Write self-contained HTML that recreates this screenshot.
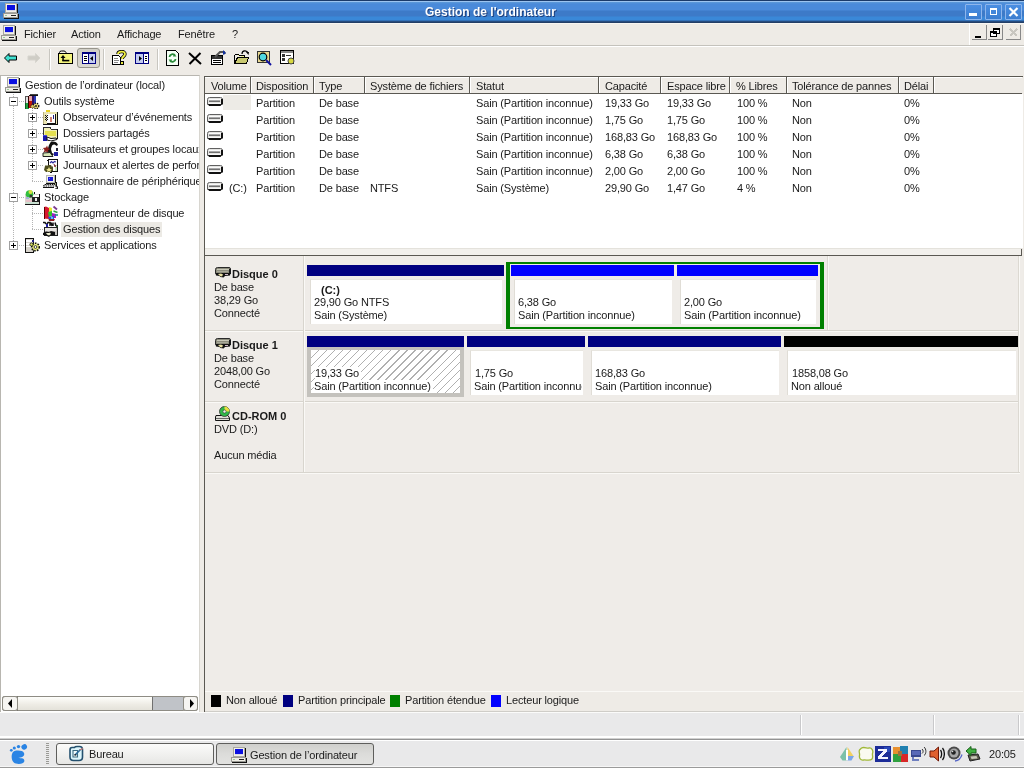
<!DOCTYPE html><html><head><meta charset="utf-8"><style>
*{margin:0;padding:0;box-sizing:border-box}
html,body{width:1024px;height:768px;overflow:hidden;background:#EEEBE6;font-family:"Liberation Sans", sans-serif;font-size:11px;color:#000}
.a{position:absolute}
.t{position:absolute;white-space:pre;line-height:13px;font-size:11px;letter-spacing:-0.15px;color:#1a1a1a}
.b{font-weight:bold;letter-spacing:0}
</style></head><body><div id="root" style="position:absolute;left:0;top:0;width:1024px;height:768px;overflow:hidden;will-change:transform">
<div class="a" style="left:0;top:0;width:1024px;height:23px;background:linear-gradient(#1A3A6A 0px,#1A3A6A 1px,#9CC4F0 1px,#9CC4F0 2px,#5E9AD8 2px,#4A8ADA 4px,#4A8ADA 10px,#3D7AC8 11px,#3D7AC8 16px,#3A88D8 17px,#3A88D8 20px,#2A5A98 21px,#233E66 22px,#233E66 23px)"></div>
<svg class="a" style="left:3px;top:3px" width="16" height="16" viewBox="0 0 16 16" shape-rendering="crispEdges"><rect x="3" y="1" width="12" height="10" fill="#111"/><rect x="2" y="0" width="12" height="10" fill="#A8A8A0"/><rect x="3" y="1" width="10" height="8" fill="#F2F0E8"/><rect x="4" y="2" width="8" height="5" fill="#0A10E0"/><rect x="4" y="7" width="8" height="1" fill="#D8D8E8"/><rect x="1" y="11" width="15" height="5" fill="#111"/><rect x="0" y="10" width="15" height="5" fill="#9A9A94"/><rect x="1" y="11" width="13" height="3" fill="#F0EEE6"/><rect x="8" y="12" width="5" height="1" fill="#222"/><rect x="2" y="12" width="2" height="1" fill="#9c9"/></svg>
<div class="t b" style="left:425px;top:5px;color:#fff;font-size:12px;line-height:15px;text-shadow:1px 1px 0 #1c3c78">Gestion de l'ordinateur</div>
<div class="a" style="left:965px;top:4px;width:17px;height:16px;border:1px solid #8EB6EC;border-radius:1px;background:linear-gradient(#4A8EE2,#3C7ED0)"></div>
<div class="a" style="left:985px;top:4px;width:17px;height:16px;border:1px solid #8EB6EC;border-radius:1px;background:linear-gradient(#4A8EE2,#3C7ED0)"></div>
<div class="a" style="left:1005px;top:4px;width:17px;height:16px;border:1px solid #8EB6EC;border-radius:1px;background:linear-gradient(#4A8EE2,#3C7ED0)"></div>
<div class="a" style="left:969px;top:13px;width:8px;height:3px;background:#fff;"></div>
<div class="a" style="left:990px;top:8px;width:7px;height:7px;border:1px solid #fff;border-top-width:2px"></div>
<svg class="a" style="left:1008px;top:7px" width="11" height="10" viewBox="0 0 11 10"><path d="M1.5 1 L9.5 9 M9.5 1 L1.5 9" stroke="#fff" stroke-width="2.2"/></svg>
<div class="a" style="left:0px;top:23px;width:1024px;height:1px;background:#F8F6F2;"></div>
<div class="a" style="left:0px;top:45px;width:1024px;height:1px;background:#C4C2BC;"></div>
<div class="a" style="left:0px;top:46px;width:1024px;height:1px;background:#fff;"></div>
<svg class="a" style="left:1px;top:25px" width="16" height="16" viewBox="0 0 16 16" shape-rendering="crispEdges"><rect x="3" y="1" width="12" height="10" fill="#111"/><rect x="2" y="0" width="12" height="10" fill="#A8A8A0"/><rect x="3" y="1" width="10" height="8" fill="#F2F0E8"/><rect x="4" y="2" width="8" height="5" fill="#0A10E0"/><rect x="4" y="7" width="8" height="1" fill="#D8D8E8"/><rect x="1" y="11" width="15" height="5" fill="#111"/><rect x="0" y="10" width="15" height="5" fill="#9A9A94"/><rect x="1" y="11" width="13" height="3" fill="#F0EEE6"/><rect x="8" y="12" width="5" height="1" fill="#222"/><rect x="2" y="12" width="2" height="1" fill="#9c9"/></svg>
<div class="t" style="left:24px;top:28px;">Fichier</div>
<div class="t" style="left:71px;top:28px;">Action</div>
<div class="t" style="left:117px;top:28px;">Affichage</div>
<div class="t" style="left:178px;top:28px;">Fenêtre</div>
<div class="t" style="left:232px;top:28px;">?</div>
<div class="a" style="left:969px;top:23px;width:1px;height:22px;background:#fff;"></div>
<div class="a" style="left:972px;top:25px;width:15px;height:15px;background:none;border-right:1px solid #888;border-bottom:1px solid #888"></div>
<div class="a" style="left:975px;top:36px;width:6px;height:2px;background:#000;"></div>
<div class="a" style="left:988px;top:25px;width:15px;height:15px;background:none;border-right:1px solid #888;border-bottom:1px solid #888"></div>
<svg class="a" style="left:990px;top:28px" width="11" height="10" viewBox="0 0 11 10" shape-rendering="crispEdges"><path d="M3.5 0.5h6v5h-6z M0.5 3.5h6v5h-6z" fill="#fff" stroke="#000" stroke-width="1"/><rect x="3" y="0" width="7" height="2" fill="#000"/><rect x="0" y="3" width="7" height="2" fill="#000"/></svg>
<div class="a" style="left:1006px;top:25px;width:15px;height:15px;background:none;border-right:1px solid #888;border-bottom:1px solid #888"></div>
<svg class="a" style="left:1009px;top:28px" width="9" height="9" viewBox="0 0 9 9" shape-rendering="crispEdges"><path d="M1 1 L8 8 M8 1 L1 8" stroke="#C8C6C0" stroke-width="1.6"/></svg>
<div class="a" style="left:49px;top:49px;width:1px;height:21px;background:#C8C6C0;"></div>
<div class="a" style="left:50px;top:49px;width:1px;height:21px;background:#fff;"></div>
<div class="a" style="left:103px;top:49px;width:1px;height:21px;background:#C8C6C0;"></div>
<div class="a" style="left:104px;top:49px;width:1px;height:21px;background:#fff;"></div>
<div class="a" style="left:157px;top:49px;width:1px;height:21px;background:#C8C6C0;"></div>
<div class="a" style="left:158px;top:49px;width:1px;height:21px;background:#fff;"></div>
<svg class="a" style="left:4px;top:53px" width="14" height="11" viewBox="0 0 14 11" shape-rendering="crispEdges"><path d="M0.5 5 L5 0.5 L5 3 L12.5 3 L12.5 7 L5 7 L5 9.5 Z" fill="#40E0D0" stroke="#000" stroke-width="1" shape-rendering="auto"/></svg>
<svg class="a" style="left:27px;top:53px" width="14" height="11" viewBox="0 0 14 11" shape-rendering="crispEdges"><path d="M13 5 L8.5 0.5 L8.5 3 L1 3 L1 7 L8.5 7 L8.5 9.5 Z" fill="#CFCDC6" stroke="#D6D4CE" stroke-width="1" shape-rendering="auto"/></svg>
<svg class="a" style="left:58px;top:50px" width="15" height="14" viewBox="0 0 15 14" shape-rendering="auto"><path d="M1.5 3.5 L1.5 2.5 Q1.5 1 3.5 1 L6 1 Q7.5 1 8 2.5 L8.5 3.5" fill="#F4F2E8" stroke="#000"/><rect x="0.5" y="3.5" width="14" height="10" fill="#F4F47C" stroke="#000"/><path d="M2.5 8 L5 5 L7.5 8 Z" fill="#000"/><rect x="4.3" y="7.5" width="1.5" height="3.5" fill="#000"/><rect x="4.3" y="9.8" width="7" height="1.6" fill="#000"/></svg>
<div class="a" style="left:77px;top:48px;width:23px;height:20px;border:1px solid #97958C;border-radius:3px;background:linear-gradient(#D0CEC6,#DCDAD2)"></div>
<svg class="a" style="left:82px;top:52px" width="14" height="12" viewBox="0 0 14 12" shape-rendering="crispEdges"><rect x="0" y="0" width="14" height="12" fill="#000080"/><rect x="1" y="2" width="5" height="9" fill="#fff"/><rect x="7" y="2" width="6" height="9" fill="#C4CCF0"/><rect x="2" y="4" width="3" height="1" fill="#000"/><rect x="2" y="6" width="3" height="1" fill="#000"/><rect x="2" y="8" width="3" height="1" fill="#000"/><path d="M8 6.5 L11 4 L11 9 Z" fill="#000" shape-rendering="auto"/></svg>
<svg class="a" style="left:112px;top:50px" width="15" height="15" viewBox="0 0 15 15" shape-rendering="crispEdges"><path d="M0.5 5.5 L6.5 5.5 L8.5 7.5 L8.5 14.5 L0.5 14.5 Z" fill="#fff" stroke="#000"/><rect x="2" y="8" width="4" height="1" fill="#888"/><rect x="2" y="10" width="5" height="1" fill="#888"/><rect x="2" y="12" width="4" height="1" fill="#888"/><path d="M6 4 C6 1 13 0.5 13 4 C13 6.5 10 6.5 10 9" fill="none" stroke="#000" stroke-width="3.4" shape-rendering="auto"/><path d="M6 4 C6 1 13 0.5 13 4 C13 6.5 10 6.5 10 9" fill="none" stroke="#F0F040" stroke-width="1.8" shape-rendering="auto"/><rect x="8.5" y="11" width="3" height="3" fill="#E8E840" stroke="#000" stroke-width="1"/></svg>
<svg class="a" style="left:135px;top:52px" width="14" height="12" viewBox="0 0 14 12" shape-rendering="crispEdges"><rect x="0" y="0" width="14" height="12" fill="#000080"/><rect x="1" y="2" width="7" height="9" fill="#C4CCF0"/><rect x="9" y="2" width="4" height="9" fill="#fff"/><rect x="10" y="4" width="2" height="1" fill="#000"/><rect x="10" y="6" width="2" height="1" fill="#000"/><rect x="10" y="8" width="2" height="1" fill="#000"/><path d="M7 6.5 L4 4 L4 9 Z" fill="#000" shape-rendering="auto"/></svg>
<svg class="a" style="left:166px;top:50px" width="13" height="16" viewBox="0 0 13 16" shape-rendering="crispEdges"><path d="M0.5 0.5 L9.5 0.5 L12.5 3.5 L12.5 15.5 L0.5 15.5 Z" fill="#F4FFF4" stroke="#000"/><path d="M3.5 7 A3 3 0 0 1 9 5.5 M9.5 9 A3 3 0 0 1 4 10.5" fill="none" stroke="#2A8A3A" stroke-width="1.8" shape-rendering="auto"/><path d="M8 3.5 L10.5 6.5 L7 6.5Z M5 12.5 L2.5 9.5 L6 9.5Z" fill="#2A8A3A" shape-rendering="auto"/></svg>
<svg class="a" style="left:188px;top:52px" width="14" height="13" viewBox="0 0 14 13" shape-rendering="crispEdges"><path d="M1 1 L13 12 M12.5 1 L1.5 12" stroke="#000" stroke-width="2" shape-rendering="auto"/></svg>
<svg class="a" style="left:211px;top:50px" width="15" height="15" viewBox="0 0 15 15" shape-rendering="crispEdges"><rect x="0.5" y="5.5" width="11" height="9" fill="#fff" stroke="#000"/><rect x="1" y="6" width="10" height="3" fill="#333"/><rect x="2" y="10" width="8" height="1" fill="#000"/><rect x="2" y="12" width="8" height="1" fill="#000"/><path d="M4 7 L9 2 L13 2 L14 4" fill="none" stroke="#555" stroke-width="2" shape-rendering="auto"/><path d="M12 0 L15 3 L12 5Z" fill="#1030A0" shape-rendering="auto"/></svg>
<svg class="a" style="left:234px;top:50px" width="15" height="14" viewBox="0 0 15 14" shape-rendering="crispEdges"><path d="M0.5 4.5 L0.5 13.5 L12.5 13.5 L14.5 7.5 L3.5 7.5 L0.5 13.5" fill="#C8C870" stroke="#000"/><path d="M0.5 4.5 L4.5 4.5 L5.5 5.5 L10.5 5.5 L10.5 7.5" fill="#F0F090" stroke="#000"/><path d="M8 4 C8 0 13 0 14 3" fill="none" stroke="#000" stroke-width="1.2" shape-rendering="auto"/><path d="M12 2 L15 2 L14.5 5Z" fill="#000" shape-rendering="auto"/></svg>
<svg class="a" style="left:257px;top:51px" width="15" height="15" viewBox="0 0 15 15" shape-rendering="crispEdges"><rect x="0.5" y="0.5" width="12" height="11" fill="#E8D890" stroke="#333"/><circle cx="6" cy="6" r="3.8" fill="#50D8E0" stroke="#000" stroke-width="1.2" shape-rendering="auto"/><path d="M9 9 L14 14" stroke="#1010A0" stroke-width="2" shape-rendering="auto"/></svg>
<svg class="a" style="left:280px;top:50px" width="16" height="15" viewBox="0 0 16 15" shape-rendering="crispEdges"><rect x="0.5" y="0.5" width="13" height="13" fill="#fff" stroke="#000"/><rect x="1" y="1" width="12" height="2" fill="#888"/><rect x="2" y="4" width="3" height="3" fill="#333"/><rect x="6" y="5" width="5" height="1" fill="#333"/><rect x="2" y="8" width="3" height="3" fill="#333"/><circle cx="11" cy="11" r="3" fill="#D8D840" stroke="#444" shape-rendering="auto"/></svg>
<div class="a" style="left:0px;top:75px;width:200px;height:637px;background:#fff;border-left:1px solid #B8B6B0;border-top:1px solid #B8B6B0;border-right:1px solid #D8D6D0"></div>
<div class="a" style="left:1px;top:76px;width:198px;height:620px;overflow:hidden">
<div class="a" style="left:12px;top:18px;width:1px;height:152px;background:repeating-linear-gradient(#B4B4B4 0 1px, transparent 1px 2px);"></div>
<div class="a" style="left:31px;top:34px;width:1px;height:72px;background:repeating-linear-gradient(#B4B4B4 0 1px, transparent 1px 2px);"></div>
<div class="a" style="left:31px;top:130px;width:1px;height:24px;background:repeating-linear-gradient(#B4B4B4 0 1px, transparent 1px 2px);"></div>
<div class="a" style="left:16px;top:25px;width:8px;height:1px;background:repeating-linear-gradient(90deg,#B4B4B4 0 1px, transparent 1px 2px);"></div>
<div class="a" style="left:16px;top:121px;width:8px;height:1px;background:repeating-linear-gradient(90deg,#B4B4B4 0 1px, transparent 1px 2px);"></div>
<div class="a" style="left:16px;top:169px;width:8px;height:1px;background:repeating-linear-gradient(90deg,#B4B4B4 0 1px, transparent 1px 2px);"></div>
<div class="a" style="left:35px;top:41px;width:7px;height:1px;background:repeating-linear-gradient(90deg,#B4B4B4 0 1px, transparent 1px 2px);"></div>
<div class="a" style="left:35px;top:57px;width:7px;height:1px;background:repeating-linear-gradient(90deg,#B4B4B4 0 1px, transparent 1px 2px);"></div>
<div class="a" style="left:35px;top:73px;width:7px;height:1px;background:repeating-linear-gradient(90deg,#B4B4B4 0 1px, transparent 1px 2px);"></div>
<div class="a" style="left:35px;top:89px;width:7px;height:1px;background:repeating-linear-gradient(90deg,#B4B4B4 0 1px, transparent 1px 2px);"></div>
<div class="a" style="left:31px;top:105px;width:11px;height:1px;background:repeating-linear-gradient(90deg,#B4B4B4 0 1px, transparent 1px 2px);"></div>
<div class="a" style="left:31px;top:137px;width:11px;height:1px;background:repeating-linear-gradient(90deg,#B4B4B4 0 1px, transparent 1px 2px);"></div>
<div class="a" style="left:31px;top:153px;width:11px;height:1px;background:repeating-linear-gradient(90deg,#B4B4B4 0 1px, transparent 1px 2px);"></div>
<div class="a" style="left:8px;top:21px;width:9px;height:9px;background:#fff;border:1px solid #A0A0A0"></div><div class="a" style="left:10px;top:25px;width:5px;height:1px;background:#000;"></div>
<div class="a" style="left:27px;top:37px;width:9px;height:9px;background:#fff;border:1px solid #A0A0A0"></div><div class="a" style="left:29px;top:41px;width:5px;height:1px;background:#000;"></div><div class="a" style="left:31px;top:39px;width:1px;height:5px;background:#000;"></div>
<div class="a" style="left:27px;top:53px;width:9px;height:9px;background:#fff;border:1px solid #A0A0A0"></div><div class="a" style="left:29px;top:57px;width:5px;height:1px;background:#000;"></div><div class="a" style="left:31px;top:55px;width:1px;height:5px;background:#000;"></div>
<div class="a" style="left:27px;top:69px;width:9px;height:9px;background:#fff;border:1px solid #A0A0A0"></div><div class="a" style="left:29px;top:73px;width:5px;height:1px;background:#000;"></div><div class="a" style="left:31px;top:71px;width:1px;height:5px;background:#000;"></div>
<div class="a" style="left:27px;top:85px;width:9px;height:9px;background:#fff;border:1px solid #A0A0A0"></div><div class="a" style="left:29px;top:89px;width:5px;height:1px;background:#000;"></div><div class="a" style="left:31px;top:87px;width:1px;height:5px;background:#000;"></div>
<div class="a" style="left:8px;top:117px;width:9px;height:9px;background:#fff;border:1px solid #A0A0A0"></div><div class="a" style="left:10px;top:121px;width:5px;height:1px;background:#000;"></div>
<div class="a" style="left:8px;top:165px;width:9px;height:9px;background:#fff;border:1px solid #A0A0A0"></div><div class="a" style="left:10px;top:169px;width:5px;height:1px;background:#000;"></div><div class="a" style="left:12px;top:167px;width:1px;height:5px;background:#000;"></div>
<div class="a" style="left:60px;top:146px;width:101px;height:15px;background:#ECEAE5;"></div>
<svg class="a" style="left:4px;top:1px" width="16" height="16" viewBox="0 0 16 16" shape-rendering="crispEdges"><rect x="3" y="1" width="12" height="10" fill="#111"/><rect x="2" y="0" width="12" height="10" fill="#A8A8A0"/><rect x="3" y="1" width="10" height="8" fill="#F2F0E8"/><rect x="4" y="2" width="8" height="5" fill="#0A10E0"/><rect x="4" y="7" width="8" height="1" fill="#D8D8E8"/><rect x="1" y="11" width="15" height="5" fill="#111"/><rect x="0" y="10" width="15" height="5" fill="#9A9A94"/><rect x="1" y="11" width="13" height="3" fill="#F0EEE6"/><rect x="8" y="12" width="5" height="1" fill="#222"/><rect x="2" y="12" width="2" height="1" fill="#9c9"/></svg>
<svg class="a" style="left:23px;top:17px" width="16" height="16" viewBox="0 0 16 16" shape-rendering="crispEdges"><rect x="6" y="1" width="8" height="2" fill="#444"/><rect x="5" y="2" width="9" height="1" fill="#111"/><path d="M1.5 3 L4.5 3 L4.5 10 L1.5 10 Z" fill="#E0E0E0" stroke="#555" stroke-width="1"/><rect x="1" y="10" width="4" height="6" fill="#20A040"/><rect x="1" y="10" width="1" height="6" fill="#0A6020"/><rect x="5" y="3" width="3" height="5" fill="#E8A8A8"/><rect x="5" y="8" width="3" height="7" fill="#C01808"/><rect x="4" y="3" width="1" height="12" fill="#300"/><rect x="8" y="3" width="2" height="9" fill="#301060"/><rect x="10" y="3" width="1.5" height="8" fill="#2838B8"/><circle cx="12" cy="13" r="2.8" fill="#E8D878" stroke="#111" stroke-width="1.3" stroke-dasharray="1.3 1" shape-rendering="auto"/><circle cx="12" cy="13" r="0.9" fill="#111" shape-rendering="auto"/><circle cx="8.5" cy="13.5" r="1.8" fill="#D8C860" stroke="#111" stroke-width="1" stroke-dasharray="1 1" shape-rendering="auto"/></svg>
<svg class="a" style="left:41px;top:33px" width="16" height="16" viewBox="0 0 16 16" shape-rendering="crispEdges"><rect x="4" y="1" width="4" height="2" fill="#E8D020"/><rect x="1" y="3" width="15" height="13" fill="#111"/><rect x="1" y="3" width="14" height="12" fill="#EAE4B0"/><rect x="1" y="3" width="1" height="12" fill="#B8B080"/><rect x="5" y="5" width="9" height="10" fill="#111"/><rect x="5" y="5" width="8" height="9" fill="#fff"/><rect x="3" y="6" width="1" height="1" fill="#111"/><rect x="4" y="7" width="1" height="1" fill="#111"/><rect x="3" y="8" width="1" height="1" fill="#111"/><rect x="4" y="9" width="1" height="1" fill="#111"/><rect x="3" y="10" width="1" height="1" fill="#111"/><rect x="4" y="11" width="1" height="1" fill="#111"/><rect x="5" y="6" width="1" height="1" fill="#111"/><rect x="5" y="8" width="1" height="1" fill="#111"/><rect x="5" y="10" width="1" height="1" fill="#111"/><rect x="8" y="8" width="2" height="5" fill="#D08070"/><rect x="11" y="6" width="1" height="4" fill="#202080"/></svg>
<svg class="a" style="left:41px;top:49px" width="16" height="16" viewBox="0 0 16 16" shape-rendering="crispEdges"><path d="M2 2.5 L8 2.5 L9 4 L15.5 4 L15.5 13 L1.5 13 L1.5 3 Z" fill="#F2F0B8" stroke="#333" stroke-width="1"/><rect x="3" y="6" width="11" height="5" fill="#E4E050"/><rect x="15" y="4" width="1" height="10" fill="#111"/><rect x="1" y="10" width="4" height="6" fill="#1818A8"/><rect x="1" y="10" width="4" height="1" fill="#4848E0"/><path d="M5 12 L9 13.5 L14 13 L15 14.5 L9 16 L5 15 Z" fill="#fff" stroke="#111" stroke-width="1" shape-rendering="auto"/></svg>
<svg class="a" style="left:41px;top:65px" width="16" height="16" viewBox="0 0 16 16" shape-rendering="crispEdges"><path d="M9 0.5 C12 0 15.5 1 16 4 L14 5 C13 3 11 3.5 10 5 L9 8 L10 12 L12 13 L10 15 L7 13 L5.5 9 L7 4 Z" fill="#111" shape-rendering="auto"/><path d="M10 5 C11 3.5 13 3 14 5 L14.5 9 L13 11 L10.5 12 L9.5 8 Z" fill="#fff" shape-rendering="auto"/><path d="M1 7 L4 6.5 L5 4.5 L6 7 L8 8 L6 9.5 L6 12 L4 10.5 L1.5 11.5 L2.5 9 Z" fill="#8A2020" shape-rendering="auto"/><path d="M1 12 L8 11.5 L11 15.5 L1 15.5 Z" fill="#D8E8B8" stroke="#222" stroke-width="1" shape-rendering="auto"/><rect x="12" y="11" width="3.5" height="4" fill="#2020A0"/><rect x="14" y="7" width="2" height="3" fill="#223"/></svg>
<svg class="a" style="left:41px;top:81px" width="16" height="16" viewBox="0 0 16 16" shape-rendering="crispEdges"><rect x="6" y="2" width="10" height="13" fill="#111"/><rect x="7" y="3" width="8" height="11" fill="#fff"/><path d="M8 6 L9.5 4.5 L11 6 L12.5 4.5 L14 5" fill="none" stroke="#3030A0" stroke-width="1.2" shape-rendering="auto"/><path d="M12 7 L13 10 L14 8" fill="none" stroke="#803030" stroke-width="1" shape-rendering="auto"/><rect x="13" y="10" width="2" height="4" fill="#C8E8C0"/><rect x="5" y="3" width="2" height="1" fill="#111"/><path d="M3 9 L4 8 L5 9 L6 8 L9 8 L10 10 L11 9 L11 14 L8 15 L4 15 L2 13 Z" fill="#505020" shape-rendering="auto"/><path d="M7 10 L8 12 L10 12 L8.5 13 L9 15 L7 14 L5 15 L5.5 13 L4 12 L6 12 Z" fill="#F0E890" shape-rendering="auto"/><rect x="8" y="15" width="2" height="1" fill="#111"/></svg>
<svg class="a" style="left:41px;top:97px" width="16" height="16" viewBox="0 0 16 16" shape-rendering="crispEdges"><rect x="4" y="2" width="10" height="9" fill="#111"/><rect x="4" y="2" width="9" height="8" fill="#B8B8B0"/><rect x="5" y="3" width="7" height="6" fill="#F0F0F0"/><rect x="6" y="4" width="5" height="4" fill="#1818D0"/><rect x="7" y="5" width="1" height="1" fill="#6A6AF8"/><rect x="13" y="10" width="2" height="2" fill="#A8B080"/><rect x="14" y="9" width="1" height="4" fill="#111"/><path d="M3 11.5 L13 11.5 L14 13 L1 13 Z" fill="#F0F0F0" stroke="#111" stroke-width="1" stroke-dasharray="1.5 0.8" shape-rendering="auto"/><rect x="1" y="14" width="11" height="1.3" fill="#111"/><path d="M14 13 C16 13.5 16 16 14 16 L13 16" fill="#eee" stroke="#111" stroke-width="1.2" shape-rendering="auto"/></svg>
<svg class="a" style="left:23px;top:113px" width="16" height="16" viewBox="0 0 16 16" shape-rendering="crispEdges"><rect x="1" y="5" width="15" height="11" fill="#111"/><rect x="1" y="5" width="14" height="10" fill="#D8D4CC"/><rect x="9" y="6" width="6" height="2" fill="#fff"/><rect x="8" y="8" width="7" height="5" fill="#222"/><rect x="11" y="9" width="1.5" height="3" fill="#eee"/><rect x="2" y="11" width="6" height="2" fill="#E8C0C8"/><rect x="2" y="13" width="12" height="1.5" fill="#C8E0D0"/><circle cx="5.5" cy="5" r="3.8" fill="#30C040" shape-rendering="auto"/><circle cx="6.5" cy="3" r="2" fill="#D8E040" shape-rendering="auto"/><rect x="2" y="8" width="3" height="2" fill="#A8B0D8"/><circle cx="7" cy="7" r="1.5" fill="#333" shape-rendering="auto"/><rect x="10" y="3" width="1" height="2" fill="#111"/></svg>
<svg class="a" style="left:41px;top:129px" width="16" height="16" viewBox="0 0 16 16" shape-rendering="crispEdges"><path d="M2 2 L4 1.5 L7 3 L7 14 L2 13.5 Z" fill="#D81830" shape-rendering="auto"/><path d="M2 2 L2 13.5" stroke="#600" stroke-width="1"/><path d="M7 2 L10 3 L10 7 L7 8 Z" fill="#E8E830" shape-rendering="auto"/><path d="M6 7 L10 6 L10 11 L7 12 Z" fill="#30C030" shape-rendering="auto"/><path d="M10 8 L14 9 L14 13 L10 13 Z" fill="#A020C0" shape-rendering="auto"/><path d="M6 12 L12 11 L12 14 L7 14 Z" fill="#2050E0" shape-rendering="auto"/><rect x="9" y="12" width="2" height="2" fill="#60C0F0"/><path d="M6.5 14 L13 14 L12 16 L7 16 Z" fill="#902020" shape-rendering="auto"/><path d="M11.5 1.5 L15 4.5" stroke="#7A3A90" stroke-width="1.8" shape-rendering="auto"/><path d="M11.5 6 L15.5 7.5" stroke="#30A040" stroke-width="1.6" shape-rendering="auto"/><path d="M13 10 L16 10" stroke="#209090" stroke-width="1.6" shape-rendering="auto"/></svg>
<svg class="a" style="left:41px;top:145px" width="16" height="16" viewBox="0 0 16 16" shape-rendering="crispEdges"><path d="M1 1.5 L3 1.5 L4 3 M5 3 L6 1.5 L8 1.5 L8 5 M9 1.5 L10 5 M11 1.5 L11 5 M13 1.5 L14 5" fill="none" stroke="#111" stroke-width="1.5" shape-rendering="auto"/><rect x="4" y="3" width="2" height="4" fill="#2020A0"/><rect x="14" y="4" width="2" height="9" fill="#2A4A2A"/><path d="M2 6.5 L15 6.5 L15 14 L2 14 Z" fill="#C8C4C0" stroke="#222" stroke-width="1"/><rect x="3" y="7" width="11" height="3" fill="#E8E4E0"/><path d="M1 12 L4 10.5 L7 11 L9 10 L13 11 L13 14 L9 14 L7 16 L4 14.5 L1 14 Z" fill="#111" shape-rendering="auto"/><path d="M4 12 L7 12 L8 11.5 L9 13 L7 14.5 L5 13.5 Z" fill="#F0F0D0" shape-rendering="auto"/></svg>
<svg class="a" style="left:23px;top:161px" width="16" height="16" viewBox="0 0 16 16" shape-rendering="crispEdges"><rect x="1" y="1" width="9" height="15" rx="1.5" fill="#111"/><rect x="2" y="2" width="7" height="13" fill="#D8D4CC"/><rect x="2" y="3" width="6" height="2" fill="#fff"/><rect x="2" y="6" width="6" height="2" fill="#fff"/><rect x="2" y="9" width="6" height="1" fill="#fff"/><rect x="8" y="3" width="2" height="2" fill="#202080"/><circle cx="11.5" cy="10" r="3.8" fill="#E8EC80" stroke="#111" stroke-width="1.6" stroke-dasharray="1.6 1.2" shape-rendering="auto"/><circle cx="11.5" cy="10" r="1.4" fill="#fff" stroke="#111" stroke-width="0.8" shape-rendering="auto"/><circle cx="7.5" cy="7.5" r="1.6" fill="#D8E060" stroke="#111" stroke-width="0.8" shape-rendering="auto"/></svg>
<div class="t" style="left:24px;top:3px;letter-spacing:-0.12px">Gestion de l’ordinateur (local)</div>
<div class="t" style="left:43px;top:19px;letter-spacing:-0.12px">Outils système</div>
<div class="t" style="left:62px;top:35px;letter-spacing:-0.12px">Observateur d’événements</div>
<div class="t" style="left:62px;top:51px;letter-spacing:-0.12px">Dossiers partagés</div>
<div class="t" style="left:62px;top:67px;letter-spacing:-0.12px">Utilisateurs et groupes locaux</div>
<div class="t" style="left:62px;top:83px;letter-spacing:-0.12px">Journaux et alertes de performance</div>
<div class="t" style="left:62px;top:99px;letter-spacing:-0.12px">Gestionnaire de périphériques</div>
<div class="t" style="left:43px;top:115px;letter-spacing:-0.12px">Stockage</div>
<div class="t" style="left:62px;top:131px;letter-spacing:-0.12px">Défragmenteur de disque</div>
<div class="t" style="left:62px;top:147px;letter-spacing:-0.12px">Gestion des disques</div>
<div class="t" style="left:43px;top:163px;letter-spacing:-0.12px">Services et applications</div>
</div>
<div class="a" style="left:2px;top:696px;width:196px;height:15px;background:linear-gradient(#FEFEFB,#EDEBE4 60%,#E4E2DA);border:1px solid #8E8C84;border-radius:2px"></div>
<div class="a" style="left:17px;top:696px;width:1px;height:15px;background:#7A7870;"></div>
<div class="a" style="left:152px;top:697px;width:32px;height:13px;background:#C0C3C8;border-left:1px solid #707070"></div>
<div class="a" style="left:183px;top:696px;width:1px;height:15px;background:#9A988F;"></div>
<div class="a" style="left:2px;top:696px;width:16px;height:15px;border:1px solid #8E8C84;border-radius:3px;background:#F6F5F2"></div>
<div class="a" style="left:183px;top:696px;width:15px;height:15px;border:1px solid #8E8C84;border-radius:3px;background:#F6F5F2"></div>
<svg class="a" style="left:6px;top:699px" width="8" height="9" viewBox="0 0 8 9" shape-rendering="crispEdges"><path d="M6 0 L2 4.5 L6 9Z" fill="#000" shape-rendering="auto"/></svg>
<svg class="a" style="left:188px;top:699px" width="8" height="9" viewBox="0 0 8 9" shape-rendering="crispEdges"><path d="M2 0 L6 4.5 L2 9Z" fill="#000" shape-rendering="auto"/></svg>
<div class="a" style="left:204px;top:76px;width:819px;height:636px;background:#EEEBE6;border-left:1px solid #5A5852;border-top:1px solid #5A5852"></div>
<div class="a" style="left:205px;top:77px;width:817px;height:16px;background:#EEEBE6;border-top:1px solid #fff"></div>
<div class="a" style="left:205px;top:93px;width:817px;height:1px;background:#5A5852;"></div>
<div class="a" style="left:250px;top:77px;width:1px;height:16px;background:#5A5852;"></div>
<div class="a" style="left:251px;top:77px;width:1px;height:16px;background:#fff;"></div>
<div class="a" style="left:313px;top:77px;width:1px;height:16px;background:#5A5852;"></div>
<div class="a" style="left:314px;top:77px;width:1px;height:16px;background:#fff;"></div>
<div class="a" style="left:364px;top:77px;width:1px;height:16px;background:#5A5852;"></div>
<div class="a" style="left:365px;top:77px;width:1px;height:16px;background:#fff;"></div>
<div class="a" style="left:469px;top:77px;width:1px;height:16px;background:#5A5852;"></div>
<div class="a" style="left:470px;top:77px;width:1px;height:16px;background:#fff;"></div>
<div class="a" style="left:598px;top:77px;width:1px;height:16px;background:#5A5852;"></div>
<div class="a" style="left:599px;top:77px;width:1px;height:16px;background:#fff;"></div>
<div class="a" style="left:660px;top:77px;width:1px;height:16px;background:#5A5852;"></div>
<div class="a" style="left:661px;top:77px;width:1px;height:16px;background:#fff;"></div>
<div class="a" style="left:729px;top:77px;width:1px;height:16px;background:#5A5852;"></div>
<div class="a" style="left:730px;top:77px;width:1px;height:16px;background:#fff;"></div>
<div class="a" style="left:786px;top:77px;width:1px;height:16px;background:#5A5852;"></div>
<div class="a" style="left:787px;top:77px;width:1px;height:16px;background:#fff;"></div>
<div class="a" style="left:898px;top:77px;width:1px;height:16px;background:#5A5852;"></div>
<div class="a" style="left:899px;top:77px;width:1px;height:16px;background:#fff;"></div>
<div class="a" style="left:933px;top:77px;width:1px;height:16px;background:#5A5852;"></div>
<div class="a" style="left:934px;top:77px;width:1px;height:16px;background:#fff;"></div>
<div class="t" style="left:211px;top:80px;">Volume</div>
<div class="t" style="left:256px;top:80px;">Disposition</div>
<div class="t" style="left:319px;top:80px;">Type</div>
<div class="t" style="left:370px;top:80px;">Système de fichiers</div>
<div class="t" style="left:476px;top:80px;">Statut</div>
<div class="t" style="left:605px;top:80px;">Capacité</div>
<div class="t" style="left:667px;top:80px;">Espace libre</div>
<div class="t" style="left:736px;top:80px;">% Libres</div>
<div class="t" style="left:792px;top:80px;">Tolérance de pannes</div>
<div class="t" style="left:904px;top:80px;">Délai</div>
<div class="a" style="left:205px;top:94px;width:818px;height:154px;background:#fff;"></div>
<div class="a" style="left:223px;top:95px;width:28px;height:15px;background:#EDEBE6;"></div>
<svg class="a" style="left:207px;top:97px" width="16" height="10" viewBox="0 0 16 10" shape-rendering="crispEdges"><path d="M2.5 0.5 L13.5 0.5 Q15.5 0.5 15.5 2.5 L15.5 7.5 L0.5 7.5 L0.5 2.5 Q0.5 0.5 2.5 0.5 Z" fill="#E4E4E2" stroke="#606060" stroke-width="1" shape-rendering="auto"/><rect x="2" y="1.5" width="12" height="1" fill="#FAFAFA"/><rect x="2" y="3" width="11" height="1" fill="#A8A8A8"/><rect x="2" y="4" width="11" height="1" fill="#707070"/><rect x="2" y="5.5" width="12" height="1" fill="#F8F8F8"/><rect x="14" y="2" width="2" height="5" fill="#111"/><path d="M1 7 L15 7 L13.5 9 L2 9 Z" fill="#111" shape-rendering="auto"/></svg>
<div class="t" style="left:256px;top:97px;">Partition</div>
<div class="t" style="left:319px;top:97px;">De base</div>
<div class="t" style="left:476px;top:97px;">Sain (Partition inconnue)</div>
<div class="t" style="left:605px;top:97px;">19,33 Go</div>
<div class="t" style="left:667px;top:97px;">19,33 Go</div>
<div class="t" style="left:737px;top:97px;">100 %</div>
<div class="t" style="left:792px;top:97px;">Non</div>
<div class="t" style="left:904px;top:97px;">0%</div>
<svg class="a" style="left:207px;top:114px" width="16" height="10" viewBox="0 0 16 10" shape-rendering="crispEdges"><path d="M2.5 0.5 L13.5 0.5 Q15.5 0.5 15.5 2.5 L15.5 7.5 L0.5 7.5 L0.5 2.5 Q0.5 0.5 2.5 0.5 Z" fill="#E4E4E2" stroke="#606060" stroke-width="1" shape-rendering="auto"/><rect x="2" y="1.5" width="12" height="1" fill="#FAFAFA"/><rect x="2" y="3" width="11" height="1" fill="#A8A8A8"/><rect x="2" y="4" width="11" height="1" fill="#707070"/><rect x="2" y="5.5" width="12" height="1" fill="#F8F8F8"/><rect x="14" y="2" width="2" height="5" fill="#111"/><path d="M1 7 L15 7 L13.5 9 L2 9 Z" fill="#111" shape-rendering="auto"/></svg>
<div class="t" style="left:256px;top:114px;">Partition</div>
<div class="t" style="left:319px;top:114px;">De base</div>
<div class="t" style="left:476px;top:114px;">Sain (Partition inconnue)</div>
<div class="t" style="left:605px;top:114px;">1,75 Go</div>
<div class="t" style="left:667px;top:114px;">1,75 Go</div>
<div class="t" style="left:737px;top:114px;">100 %</div>
<div class="t" style="left:792px;top:114px;">Non</div>
<div class="t" style="left:904px;top:114px;">0%</div>
<svg class="a" style="left:207px;top:131px" width="16" height="10" viewBox="0 0 16 10" shape-rendering="crispEdges"><path d="M2.5 0.5 L13.5 0.5 Q15.5 0.5 15.5 2.5 L15.5 7.5 L0.5 7.5 L0.5 2.5 Q0.5 0.5 2.5 0.5 Z" fill="#E4E4E2" stroke="#606060" stroke-width="1" shape-rendering="auto"/><rect x="2" y="1.5" width="12" height="1" fill="#FAFAFA"/><rect x="2" y="3" width="11" height="1" fill="#A8A8A8"/><rect x="2" y="4" width="11" height="1" fill="#707070"/><rect x="2" y="5.5" width="12" height="1" fill="#F8F8F8"/><rect x="14" y="2" width="2" height="5" fill="#111"/><path d="M1 7 L15 7 L13.5 9 L2 9 Z" fill="#111" shape-rendering="auto"/></svg>
<div class="t" style="left:256px;top:131px;">Partition</div>
<div class="t" style="left:319px;top:131px;">De base</div>
<div class="t" style="left:476px;top:131px;">Sain (Partition inconnue)</div>
<div class="t" style="left:605px;top:131px;">168,83 Go</div>
<div class="t" style="left:667px;top:131px;">168,83 Go</div>
<div class="t" style="left:737px;top:131px;">100 %</div>
<div class="t" style="left:792px;top:131px;">Non</div>
<div class="t" style="left:904px;top:131px;">0%</div>
<svg class="a" style="left:207px;top:148px" width="16" height="10" viewBox="0 0 16 10" shape-rendering="crispEdges"><path d="M2.5 0.5 L13.5 0.5 Q15.5 0.5 15.5 2.5 L15.5 7.5 L0.5 7.5 L0.5 2.5 Q0.5 0.5 2.5 0.5 Z" fill="#E4E4E2" stroke="#606060" stroke-width="1" shape-rendering="auto"/><rect x="2" y="1.5" width="12" height="1" fill="#FAFAFA"/><rect x="2" y="3" width="11" height="1" fill="#A8A8A8"/><rect x="2" y="4" width="11" height="1" fill="#707070"/><rect x="2" y="5.5" width="12" height="1" fill="#F8F8F8"/><rect x="14" y="2" width="2" height="5" fill="#111"/><path d="M1 7 L15 7 L13.5 9 L2 9 Z" fill="#111" shape-rendering="auto"/></svg>
<div class="t" style="left:256px;top:148px;">Partition</div>
<div class="t" style="left:319px;top:148px;">De base</div>
<div class="t" style="left:476px;top:148px;">Sain (Partition inconnue)</div>
<div class="t" style="left:605px;top:148px;">6,38 Go</div>
<div class="t" style="left:667px;top:148px;">6,38 Go</div>
<div class="t" style="left:737px;top:148px;">100 %</div>
<div class="t" style="left:792px;top:148px;">Non</div>
<div class="t" style="left:904px;top:148px;">0%</div>
<svg class="a" style="left:207px;top:165px" width="16" height="10" viewBox="0 0 16 10" shape-rendering="crispEdges"><path d="M2.5 0.5 L13.5 0.5 Q15.5 0.5 15.5 2.5 L15.5 7.5 L0.5 7.5 L0.5 2.5 Q0.5 0.5 2.5 0.5 Z" fill="#E4E4E2" stroke="#606060" stroke-width="1" shape-rendering="auto"/><rect x="2" y="1.5" width="12" height="1" fill="#FAFAFA"/><rect x="2" y="3" width="11" height="1" fill="#A8A8A8"/><rect x="2" y="4" width="11" height="1" fill="#707070"/><rect x="2" y="5.5" width="12" height="1" fill="#F8F8F8"/><rect x="14" y="2" width="2" height="5" fill="#111"/><path d="M1 7 L15 7 L13.5 9 L2 9 Z" fill="#111" shape-rendering="auto"/></svg>
<div class="t" style="left:256px;top:165px;">Partition</div>
<div class="t" style="left:319px;top:165px;">De base</div>
<div class="t" style="left:476px;top:165px;">Sain (Partition inconnue)</div>
<div class="t" style="left:605px;top:165px;">2,00 Go</div>
<div class="t" style="left:667px;top:165px;">2,00 Go</div>
<div class="t" style="left:737px;top:165px;">100 %</div>
<div class="t" style="left:792px;top:165px;">Non</div>
<div class="t" style="left:904px;top:165px;">0%</div>
<svg class="a" style="left:207px;top:182px" width="16" height="10" viewBox="0 0 16 10" shape-rendering="crispEdges"><path d="M2.5 0.5 L13.5 0.5 Q15.5 0.5 15.5 2.5 L15.5 7.5 L0.5 7.5 L0.5 2.5 Q0.5 0.5 2.5 0.5 Z" fill="#E4E4E2" stroke="#606060" stroke-width="1" shape-rendering="auto"/><rect x="2" y="1.5" width="12" height="1" fill="#FAFAFA"/><rect x="2" y="3" width="11" height="1" fill="#A8A8A8"/><rect x="2" y="4" width="11" height="1" fill="#707070"/><rect x="2" y="5.5" width="12" height="1" fill="#F8F8F8"/><rect x="14" y="2" width="2" height="5" fill="#111"/><path d="M1 7 L15 7 L13.5 9 L2 9 Z" fill="#111" shape-rendering="auto"/></svg>
<div class="t" style="left:229px;top:182px;">(C:)</div>
<div class="t" style="left:256px;top:182px;">Partition</div>
<div class="t" style="left:319px;top:182px;">De base</div>
<div class="t" style="left:370px;top:182px;">NTFS</div>
<div class="t" style="left:476px;top:182px;">Sain (Système)</div>
<div class="t" style="left:605px;top:182px;">29,90 Go</div>
<div class="t" style="left:667px;top:182px;">1,47 Go</div>
<div class="t" style="left:737px;top:182px;">4 %</div>
<div class="t" style="left:792px;top:182px;">Non</div>
<div class="t" style="left:904px;top:182px;">0%</div>
<div class="a" style="left:205px;top:248px;width:817px;height:7px;background:#F2F0EC;border-top:1px solid #E4E2DC"></div>
<div class="a" style="left:205px;top:255px;width:817px;height:1px;background:#5A5852;"></div>
<div class="a" style="left:1021px;top:249px;width:1px;height:7px;background:#5A5852;"></div>
<div class="a" style="left:205px;top:256px;width:818px;height:435px;background:#EFECE8;"></div>
<div class="a" style="left:205px;top:330px;width:815px;height:1px;background:#D8D5CE;"></div>
<div class="a" style="left:205px;top:331px;width:815px;height:1px;background:#FAF9F6;"></div>
<div class="a" style="left:205px;top:401px;width:815px;height:1px;background:#D8D5CE;"></div>
<div class="a" style="left:205px;top:402px;width:815px;height:1px;background:#FAF9F6;"></div>
<div class="a" style="left:205px;top:472px;width:815px;height:1px;background:#D8D5CE;"></div>
<div class="a" style="left:205px;top:473px;width:815px;height:1px;background:#FAF9F6;"></div>
<div class="a" style="left:1018px;top:256px;width:1px;height:216px;background:#DCD9D2;"></div>
<div class="a" style="left:1019px;top:256px;width:1px;height:216px;background:#FAF9F6;"></div>
<div class="a" style="left:827px;top:256px;width:1px;height:74px;background:#DCD9D2;"></div>
<div class="a" style="left:828px;top:256px;width:1px;height:74px;background:#FAF9F6;"></div>
<div class="a" style="left:303px;top:256px;width:1px;height:216px;background:#D8D5CE;"></div>
<div class="a" style="left:304px;top:256px;width:1px;height:216px;background:#FAF9F6;"></div>
<svg class="a" style="left:215px;top:267px" width="16" height="11" viewBox="0 0 16 11" shape-rendering="crispEdges"><path d="M2.5 0.5 L14 0.5 Q15.5 0.5 15.5 2 L15.5 6.5 L0.5 6.5 L0.5 2.5 Q0.5 0.5 2.5 0.5 Z" fill="#8C8C7C" stroke="#2A2A2A" stroke-width="1" shape-rendering="auto"/><rect x="2" y="1.5" width="12" height="1.5" fill="#C8C8B8"/><rect x="2" y="3.5" width="11" height="1" fill="#A8A898"/><rect x="13.5" y="2" width="2" height="5" fill="#1A1A1A"/><path d="M0.5 6 L15.5 6 L15 8.5 L10 9 L8.5 10.5 L5.5 10 L4.5 9 L1 8.5 Z" fill="#111" shape-rendering="auto"/><path d="M3 7 L6 6.5 L8 7.5 L7 9.5 L5 9 Z" fill="#E8E0A0" shape-rendering="auto"/><rect x="9.5" y="6.8" width="3" height="1.4" fill="#D0B8C8"/></svg>
<div class="t b" style="left:232px;top:268px;">Disque 0</div>
<div class="t" style="left:214px;top:281px;">De base</div>
<div class="t" style="left:214px;top:294px;">38,29 Go</div>
<div class="t" style="left:214px;top:307px;">Connecté</div>
<svg class="a" style="left:215px;top:338px" width="16" height="11" viewBox="0 0 16 11" shape-rendering="crispEdges"><path d="M2.5 0.5 L14 0.5 Q15.5 0.5 15.5 2 L15.5 6.5 L0.5 6.5 L0.5 2.5 Q0.5 0.5 2.5 0.5 Z" fill="#8C8C7C" stroke="#2A2A2A" stroke-width="1" shape-rendering="auto"/><rect x="2" y="1.5" width="12" height="1.5" fill="#C8C8B8"/><rect x="2" y="3.5" width="11" height="1" fill="#A8A898"/><rect x="13.5" y="2" width="2" height="5" fill="#1A1A1A"/><path d="M0.5 6 L15.5 6 L15 8.5 L10 9 L8.5 10.5 L5.5 10 L4.5 9 L1 8.5 Z" fill="#111" shape-rendering="auto"/><path d="M3 7 L6 6.5 L8 7.5 L7 9.5 L5 9 Z" fill="#E8E0A0" shape-rendering="auto"/><rect x="9.5" y="6.8" width="3" height="1.4" fill="#D0B8C8"/></svg>
<div class="t b" style="left:232px;top:339px;">Disque 1</div>
<div class="t" style="left:214px;top:352px;">De base</div>
<div class="t" style="left:214px;top:365px;">2048,00 Go</div>
<div class="t" style="left:214px;top:378px;">Connecté</div>
<svg class="a" style="left:215px;top:406px" width="16" height="15" viewBox="0 0 16 15" shape-rendering="crispEdges"><path d="M1 9.5 L13 9.5 L14.5 12 L14.5 14.5 L0.5 14.5 L0.5 11 Z" fill="#E0E0D8" stroke="#111" stroke-width="1" shape-rendering="auto"/><rect x="1" y="12" width="13" height="1" fill="#666"/><circle cx="9.5" cy="5.5" r="5" fill="#30B848" stroke="#333" stroke-width="0.8" shape-rendering="auto"/><path d="M9.5 0.5 A5 5 0 0 1 14.5 5.5 L9.5 5.5 Z" fill="#E8E040" shape-rendering="auto"/><circle cx="9.5" cy="5.5" r="1.6" fill="#F0F0F0" stroke="#333" stroke-width="0.6" shape-rendering="auto"/></svg>
<div class="t b" style="left:232px;top:410px;">CD-ROM 0</div>
<div class="t" style="left:214px;top:423px;">DVD (D:)</div>
<div class="t" style="left:214px;top:449px;">Aucun média</div>
<div class="a" style="left:307px;top:265px;width:197px;height:11px;background:#000080;"></div><div class="a" style="left:310px;top:279px;width:192px;height:45px;background:#fff;border-left:1px solid #E0DDD6;border-top:1px solid #E8E6E0"></div>
<div class="a" style="left:506px;top:262px;width:318px;height:67px;background:transparent;border:solid #008000;border-width:2px 4px 2px 4px"></div>
<div class="a" style="left:511px;top:265px;width:163px;height:11px;background:#0000FF;"></div><div class="a" style="left:514px;top:279px;width:158px;height:45px;background:#fff;border-left:1px solid #E0DDD6;border-top:1px solid #E8E6E0"></div>
<div class="a" style="left:677px;top:265px;width:141px;height:11px;background:#0000FF;"></div><div class="a" style="left:680px;top:279px;width:136px;height:45px;background:#fff;border-left:1px solid #E0DDD6;border-top:1px solid #E8E6E0"></div>
<div class="t b" style="left:321px;top:284px;">(C:)</div>
<div class="t" style="left:314px;top:296px;">29,90 Go NTFS</div>
<div class="t" style="left:314px;top:309px;">Sain (Système)</div>
<div class="t" style="left:518px;top:296px;">6,38 Go</div>
<div class="t" style="left:518px;top:309px;">Sain (Partition inconnue)</div>
<div class="t" style="left:684px;top:296px;">2,00 Go</div>
<div class="t" style="left:684px;top:309px;">Sain (Partition inconnue)</div>
<div class="a" style="left:307px;top:336px;width:157px;height:11px;background:#000080;"></div><div class="a" style="left:307px;top:347px;width:157px;height:50px;background:#C4C2BD;"></div><div class="a" style="left:311px;top:350px;width:149px;height:43px;background:repeating-linear-gradient(-45deg,#fff 0 4.4px,#B0B0B0 4.4px 5.4px,#fff 5.4px 5.7px);"></div>
<div class="a" style="left:467px;top:336px;width:118px;height:11px;background:#000080;"></div><div class="a" style="left:470px;top:350px;width:113px;height:45px;background:#fff;border-left:1px solid #E0DDD6;border-top:1px solid #E8E6E0"></div>
<div class="a" style="left:588px;top:336px;width:193px;height:11px;background:#000080;"></div><div class="a" style="left:591px;top:350px;width:188px;height:45px;background:#fff;border-left:1px solid #E0DDD6;border-top:1px solid #E8E6E0"></div>
<div class="a" style="left:784px;top:336px;width:234px;height:11px;background:#000000;"></div><div class="a" style="left:787px;top:350px;width:229px;height:45px;background:#fff;border-left:1px solid #E0DDD6;border-top:1px solid #E8E6E0"></div>
<div class="t" style="left:315px;top:367px;background:#fff;padding-right:2px">19,33 Go</div>
<div class="t" style="left:314px;top:380px;background:#fff;padding-right:2px">Sain (Partition inconnue)</div>
<div class="a" style="left:467px;top:350px;width:115px;height:44px;overflow:hidden"><div class="t" style="left:8px;top:17px;">1,75 Go</div><div class="t" style="left:7px;top:30px;">Sain (Partition inconnue)</div></div>
<div class="t" style="left:595px;top:367px;">168,83 Go</div>
<div class="t" style="left:595px;top:380px;">Sain (Partition inconnue)</div>
<div class="t" style="left:792px;top:367px;">1858,08 Go</div>
<div class="t" style="left:791px;top:380px;">Non alloué</div>
<div class="a" style="left:205px;top:691px;width:818px;height:1px;background:#FAF9F6;"></div>
<div class="a" style="left:205px;top:692px;width:818px;height:19px;background:#EEEBE6;"></div>
<div class="a" style="left:211px;top:695px;width:10px;height:12px;background:#000;"></div>
<div class="t" style="left:226px;top:694px;">Non alloué</div>
<div class="a" style="left:283px;top:695px;width:10px;height:12px;background:#000080;"></div>
<div class="t" style="left:298px;top:694px;">Partition principale</div>
<div class="a" style="left:390px;top:695px;width:10px;height:12px;background:#008000;"></div>
<div class="t" style="left:405px;top:694px;">Partition étendue</div>
<div class="a" style="left:491px;top:695px;width:10px;height:12px;background:#0000FF;"></div>
<div class="t" style="left:506px;top:694px;">Lecteur logique</div>
<div class="a" style="left:205px;top:711px;width:818px;height:1px;background:#CFCDC8;"></div>
<div class="a" style="left:0px;top:712px;width:1024px;height:1px;background:#FBFBFA;"></div>
<div class="a" style="left:0px;top:713px;width:1024px;height:23px;background:#E9E9EA;"></div>
<div class="a" style="left:800px;top:715px;width:1px;height:20px;background:#C9C9CB;"></div>
<div class="a" style="left:801px;top:715px;width:1px;height:20px;background:#FFFFFF;"></div>
<div class="a" style="left:933px;top:715px;width:1px;height:20px;background:#C9C9CB;"></div>
<div class="a" style="left:934px;top:715px;width:1px;height:20px;background:#FFFFFF;"></div>
<div class="a" style="left:1018px;top:715px;width:1px;height:20px;background:#C9C9CB;"></div>
<div class="a" style="left:1019px;top:715px;width:1px;height:20px;background:#FFFFFF;"></div>
<div class="a" style="left:0px;top:736px;width:1024px;height:2px;background:#FFFFFF;"></div>
<div class="a" style="left:0px;top:738px;width:1024px;height:1px;background:#D0D0D0;"></div>
<div class="a" style="left:0px;top:739px;width:1024px;height:1px;background:#939393;"></div>
<div class="a" style="left:0px;top:740px;width:1024px;height:1px;background:#FFFFFF;"></div>
<div class="a" style="left:0px;top:741px;width:1024px;height:25px;background:#E9E9EA;"></div>
<div class="a" style="left:0px;top:766px;width:1024px;height:1px;background:#F6F6F6;"></div>
<div class="a" style="left:0px;top:767px;width:1024px;height:1px;background:#9A9A9A;"></div>
<svg class="a" style="left:8px;top:742px" width="22" height="24" viewBox="0 0 22 24" shape-rendering="auto"><g transform="translate(-8,-742)" fill="#2A84E4"><ellipse cx="24.2" cy="746.9" rx="2.9" ry="2.6" transform="rotate(-30 24.2 746.9)"/><circle cx="18.5" cy="746.6" r="1.7"/><circle cx="14.3" cy="748" r="1.55"/><circle cx="11.3" cy="750.3" r="1.4"/><path d="M14.5 751 C18 750.2 23 750.5 24 753 C24.8 755 23.5 756.5 21.5 757.2 L18.3 757.9 C19.5 758 21.5 758 23 758.6 C24.8 759.5 24.8 762 23 763 C20.5 764.3 16 764.3 13.8 762.5 C11.5 760.5 11.3 756.5 12 754 C12.5 752.5 13.3 751.4 14.5 751 Z"/></g></svg>
<div class="a" style="left:46px;top:743px;width:3px;height:21px;background:repeating-linear-gradient(#9A9A96 0 1px, transparent 1px 2px);"></div>
<div class="a" style="left:56px;top:743px;width:158px;height:22px;border:1px solid #5E5E5C;border-radius:3px;background:linear-gradient(#FBFBFA,#EFEFED 60%,#E6E6E4)"></div>
<svg class="a" style="left:68px;top:745px" width="17" height="17" viewBox="0 0 17 17" shape-rendering="auto"><path d="M4 2.5 Q2 2.5 2 5 L2 12 Q2 15.5 5.5 15.5 L11 15.5 Q14.5 15.5 14.5 12 L14.5 4.5 Q14.5 1.5 11.5 1.5 L9 1.5 Q7 1.5 6.5 2.5 Z" fill="#DDF6FC" stroke="#24506E" stroke-width="1.6"/><path d="M5 5.5 L9.5 5.5 L9.5 12 L5 12 Z" fill="#F0FAFC" stroke="#3A6A80" stroke-width="1.1"/><path d="M7 10 L12.5 4.5" stroke="#2A6A9A" stroke-width="1.6"/><path d="M11.5 5 L15 3.5" stroke="#C07070" stroke-width="1.2"/><rect x="6.3" y="9.3" width="2" height="1.2" fill="#111"/></svg>
<div class="t" style="left:89px;top:748px;">Bureau</div>
<div class="a" style="left:216px;top:743px;width:158px;height:22px;border:1px solid #5E5E5C;border-radius:3px;background:linear-gradient(#CFCFCC,#DCDCDA 50%,#E2E2E0)"></div>
<svg class="a" style="left:231px;top:747px" width="16" height="16" viewBox="0 0 16 16" shape-rendering="crispEdges"><rect x="3" y="1" width="12" height="10" fill="#111"/><rect x="2" y="0" width="12" height="10" fill="#A8A8A0"/><rect x="3" y="1" width="10" height="8" fill="#F2F0E8"/><rect x="4" y="2" width="8" height="5" fill="#0A10E0"/><rect x="4" y="7" width="8" height="1" fill="#D8D8E8"/><rect x="1" y="11" width="15" height="5" fill="#111"/><rect x="0" y="10" width="15" height="5" fill="#9A9A94"/><rect x="1" y="11" width="13" height="3" fill="#F0EEE6"/><rect x="8" y="12" width="5" height="1" fill="#222"/><rect x="2" y="12" width="2" height="1" fill="#9c9"/></svg>
<div class="t" style="left:250px;top:749px;">Gestion de l’ordinateur</div>
<svg class="a" style="left:839px;top:746px" width="16" height="16" viewBox="0 0 16 16" shape-rendering="crispEdges"><path d="M7.5 1 L1 11 L3.5 14.5 L7.5 14.5 Z" fill="#7CC0A8" shape-rendering="auto"/><path d="M8.5 1 L14.5 10 L8.5 10 Z" fill="#F2D060" shape-rendering="auto"/><path d="M8.5 10 L15 10 L12.5 14.5 L8.5 14.5 Z" fill="#7AA6E8" shape-rendering="auto"/><rect x="7.3" y="4" width="1.6" height="9" fill="#fff"/><rect x="7" y="12" width="2" height="2" fill="#fff"/></svg>
<svg class="a" style="left:858px;top:746px" width="16" height="16" viewBox="0 0 16 16" shape-rendering="crispEdges"><path d="M3.5 2 C6 0.5 9 2.5 11 2 C14 1.5 15.5 5 14.5 7.5 C14 9.5 15.5 11 14 13 C12 15.5 8 13.5 5.5 14 C2.5 14.5 1 12 1.5 9.5 C2 7.5 0.5 5.5 1.5 4 Z" fill="#FAFAF0" stroke="#A0B838" stroke-width="1.3" shape-rendering="auto"/></svg>
<svg class="a" style="left:875px;top:746px" width="16" height="16" viewBox="0 0 16 16" shape-rendering="crispEdges"><rect x="0" y="0" width="16" height="16" rx="1" fill="#1C2C98"/><rect x="9" y="1" width="6" height="5" fill="#2A48B8"/><path d="M3 3 L12 3 L12 5 L7 11 L13 11 L13 13 L3 13 L3 11 L8.5 5 L3 5 Z" fill="#F4F4FF"/><path d="M9 8 L12 11 L9 11 Z" fill="#1C2C98"/></svg>
<svg class="a" style="left:893px;top:746px" width="16" height="16" viewBox="0 0 16 16" shape-rendering="crispEdges"><rect x="0" y="1" width="7" height="7" fill="#E89030"/><rect x="7" y="0" width="8" height="8" fill="#2080B0"/><rect x="0" y="8" width="8" height="8" fill="#30A040"/><rect x="8" y="8" width="7" height="8" fill="#D82828"/><rect x="5" y="5" width="4" height="5" fill="#A07040"/></svg>
<svg class="a" style="left:911px;top:746px" width="16" height="16" viewBox="0 0 16 16" shape-rendering="crispEdges"><rect x="0" y="4" width="10" height="7" fill="#3A4A90"/><rect x="1" y="5" width="8" height="4" fill="#5A6AB8"/><path d="M2 11 L2 14 L8 14" fill="none" stroke="#7080C0" stroke-width="1.6"/><path d="M11 3 C12.5 4 12.5 6.5 11 7.5 M13 1 C15.5 3 15.5 8 13 9.5" fill="none" stroke="#333" stroke-width="1" shape-rendering="auto"/></svg>
<svg class="a" style="left:929px;top:746px" width="16" height="16" viewBox="0 0 16 16" shape-rendering="crispEdges"><path d="M1 5 L5 5 L9.5 1 L9.5 15 L5 11 L1 11Z" fill="#E06030" stroke="#701808" shape-rendering="auto"/><path d="M11.5 4 C13 6 13 10 11.5 12 M13.5 2 C16 5 16 11 13.5 14" fill="none" stroke="#111" stroke-width="1.3" shape-rendering="auto"/></svg>
<svg class="a" style="left:947px;top:746px" width="16" height="16" viewBox="0 0 16 16" shape-rendering="crispEdges"><circle cx="7" cy="7" r="6.5" fill="#4A4A4A" shape-rendering="auto"/><circle cx="7" cy="7" r="4.5" fill="#A8A8A8" shape-rendering="auto"/><circle cx="6.5" cy="6.5" r="2.3" fill="#222" shape-rendering="auto"/><circle cx="5.5" cy="5.5" r="0.8" fill="#ddd" shape-rendering="auto"/><path d="M8 15 C11.5 14.5 14 12 15 8.5" fill="none" stroke="#5A6AC8" stroke-width="1.3" shape-rendering="auto"/></svg>
<svg class="a" style="left:965px;top:746px" width="16" height="16" viewBox="0 0 16 16" shape-rendering="crispEdges"><path d="M3 9 L13 8 L15 13 L5 15 Z" fill="#5A5A4A" stroke="#222" shape-rendering="auto"/><path d="M5.5 10.5 L11.5 10 L12.5 12.5 L6.5 13 Z" fill="#C8C8B8" shape-rendering="auto"/><path d="M1 5 L6 0.5 L6 3 L11 3 L11 7 L6 7 L6 9.5Z" fill="#40B040" stroke="#186018" shape-rendering="auto"/></svg>
<div class="t" style="left:989px;top:748px;">20:05</div>
</div></body></html>
